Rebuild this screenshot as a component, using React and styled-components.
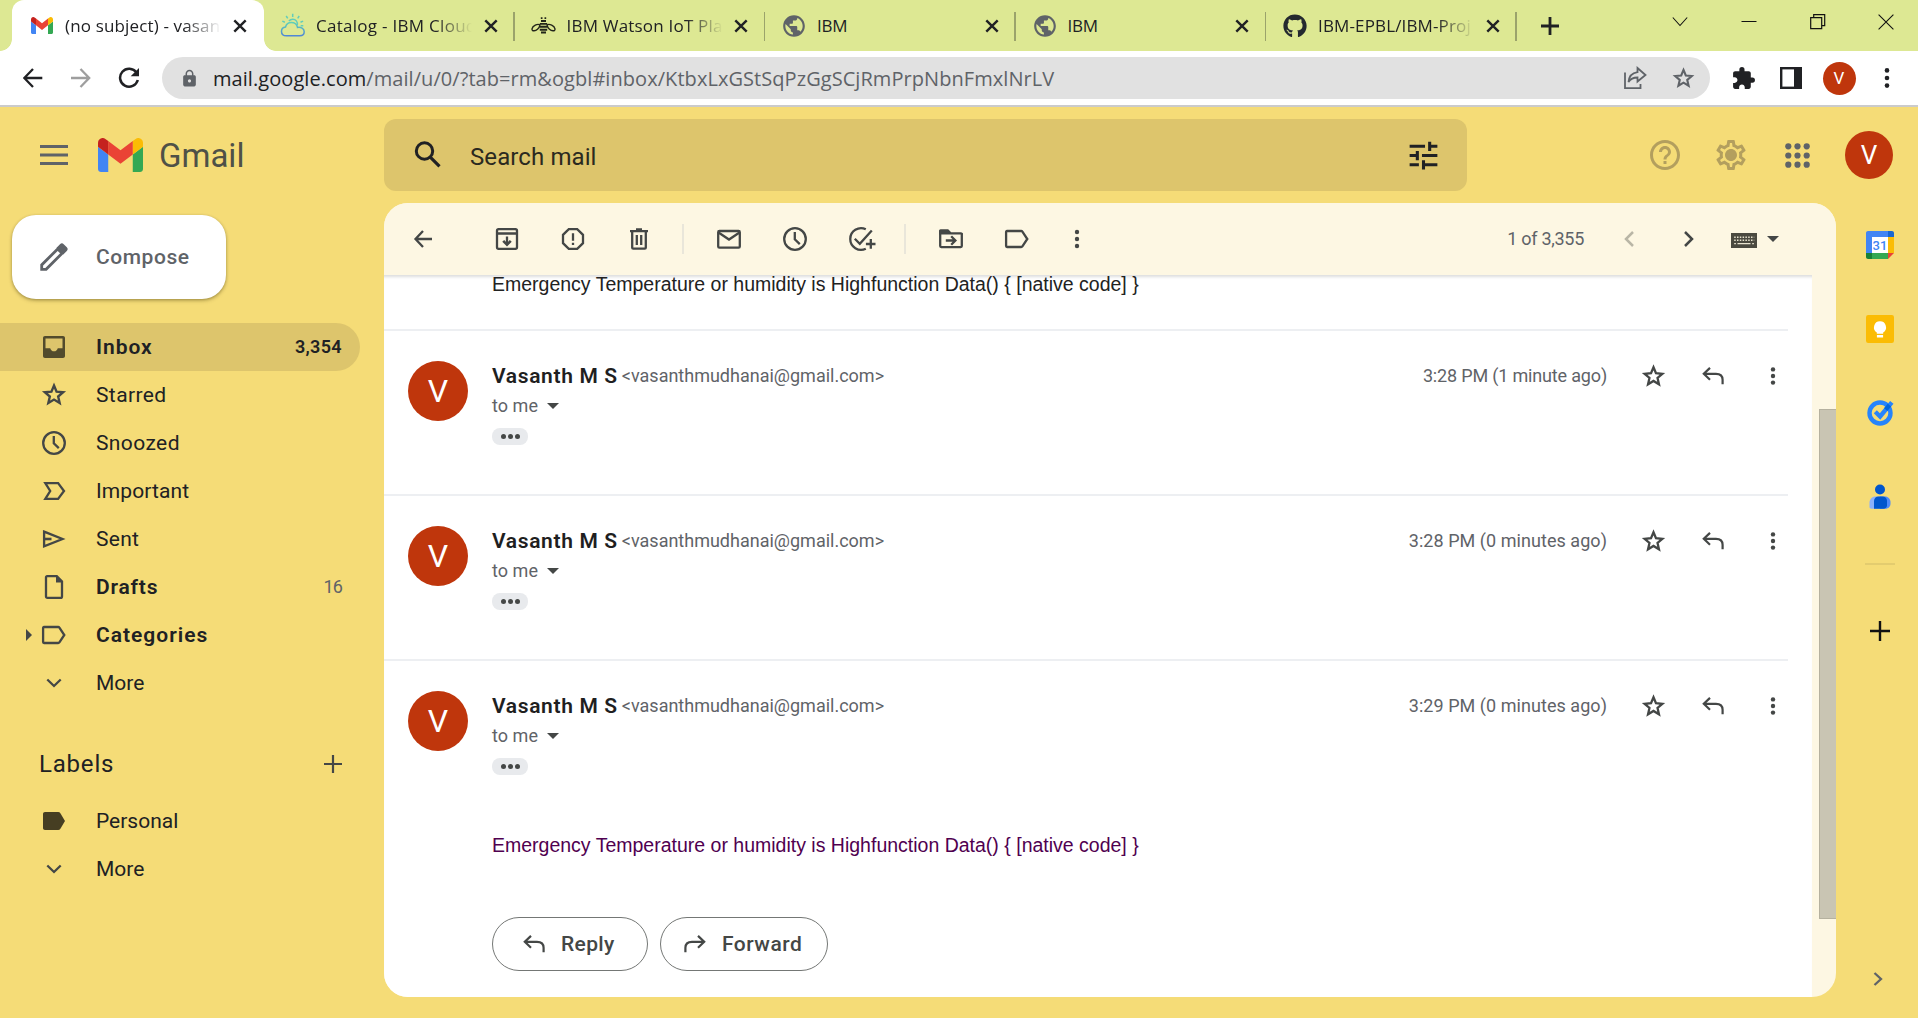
import React from "react";
import styled, { createGlobalStyle, css } from "styled-components";
import { MdPublic, MdLock, MdExtension, MdOutlineSettings, MdHelpOutline, MdTune } from "react-icons/md";
import { FaGithub } from "react-icons/fa";

const Global = createGlobalStyle`
  * { box-sizing: border-box; }
  html, body { margin: 0; padding: 0; height: 100%; overflow: hidden; }
  svg { display: block; flex: none; }
`;

const UI = `"Open Sans", "Noto Sans", sans-serif`;
const GS = `Roboto, "Liberation Sans", sans-serif`;

/* ---------- browser chrome ---------- */
const Page = styled.div`
  width: 100vw; height: 100vh; display: flex; flex-direction: column;
  background: #f5dc77; font-family: ${GS}; color: #202124; overflow: hidden;
`;
const TabStrip = styled.div`
  height: 51px; flex: none; display: flex; background: #dde893; padding-left: 12px;
`;
const Tab = styled.div`
  position: relative; height: 51px; width: ${(p) => (p.$active ? 252 : 250.5)}px; flex: none;
  display: flex; align-items: center; padding-left: ${(p) => (p.$active ? 18 : 17)}px;
  ${(p) =>
    p.$active
      ? css`
          background: #fff; border-radius: 12px 12px 0 0;
          &::before, &::after {
            content: ""; position: absolute; bottom: 0; width: 12px; height: 12px;
          }
          &::before { left: -12px; background: radial-gradient(circle at 0 0, transparent 11.5px, #fff 12.2px); }
          &::after { right: -12px; background: radial-gradient(circle at 100% 0, transparent 11.5px, #fff 12.2px); }
        `
      : css`
          &::after {
            content: ""; position: absolute; right: 0; top: 12px; height: 29px; width: 1.5px; background: #9ba36b;
          }
        `}
`;
const Favicon = styled.div`
  width: 24px; height: 24px; flex: none; display: flex; align-items: center; justify-content: center; color: ${(p) => p.$c || "#5f6368"};
`;
const TabTitle = styled.div`
  width: 156px; margin: 0 10.5px 0 11px; white-space: nowrap;
  font: 400 17px/26px ${UI}; letter-spacing: ${(p) => p.$ls || 0}px; color: #202124;
  ${(p) => p.$fade && css`mask-image: linear-gradient(to right, #000 76%, transparent 100%);`}
`;
const NewTab = styled.div`
  width: 66px; display: flex; align-items: center; justify-content: center;
`;
const WindowControls = styled.div`
  margin-left: auto; margin-right: -2px; height: 43px; display: flex; align-items: center;
`;
const Slot = styled.div`
  width: ${(p) => p.$w || 48}px; height: ${(p) => (p.$h ? p.$h + "px" : "auto")}; flex: none;
  display: flex; align-items: center; justify-content: center; color: ${(p) => p.$c || "#444746"};
`;
const AddressBar = styled.div`
  height: 56px; flex: none; display: flex; align-items: center; background: #fff;
  border-bottom: 2px solid #cbcbcb; padding-left: 9px; color: #202124;
`;
const Omnibox = styled.div`
  width: 1548px; height: 42px; margin: 0 9px; border-radius: 21px; background: #e1e1e1;
  display: flex; align-items: center; padding: 0 3px 0 15px;
`;
const Url = styled.div`
  flex: 1; margin: 2px 0 0 12px; font: 400 20px/30px ${UI}; letter-spacing: 0.06px; color: #5f6368; white-space: nowrap;
  b { font-weight: 400; color: #202124; }
`;
const Avatar = styled.div`
  width: ${(p) => p.$s}px; height: ${(p) => p.$s}px; flex: none; border-radius: 50%; background: #bf360c; color: #fff;
  display: flex; align-items: center; justify-content: center; font: 400 ${(p) => p.$f}px/1 ${GS};
`;

/* ---------- gmail header ---------- */
const Header = styled.header`
  height: 96px; flex: none; display: flex; align-items: center; padding-right: 25px;
`;
const Brand = styled.div`
  width: 384px; display: flex; align-items: center; padding-left: 40px;
`;
const BrandName = styled.div`
  margin: 2px 0 0 16px; font: 400 33px/40px ${GS}; letter-spacing: 0; color: #4f5147;
`;
const SearchBar = styled.div`
  width: 1083px; height: 72px; border-radius: 12px; background: #ddc56c; display: flex; align-items: center;
  padding: 0 29px 0 29px;
`;
const SearchText = styled.div`
  flex: 1; margin: 3px 0 0 29px; font: 400 24px/32px ${GS}; letter-spacing: 0.1px; color: #2b2a1f;
`;
const HeaderTools = styled.div`
  margin-left: auto; display: flex; align-items: center;
`;
const Gap = styled.div`width: ${(p) => p.$w}px; flex: none;`;

/* ---------- body ---------- */
const Body = styled.div`display: flex; flex: 1; min-height: 0;`;
const Side = styled.aside`width: 384px; flex: none; padding-top: 12px;`;
const Compose = styled.div`
  width: 214px; height: 84px; margin-left: 12px; border-radius: 24px; background: #fff;
  box-shadow: 0 1px 3px rgba(60, 50, 0, 0.35), 0 2px 4px rgba(60, 50, 0, 0.18);
  display: flex; align-items: center; padding-left: 27px; gap: 27px;
  font: 500 21px/28px ${GS}; letter-spacing: 0.55px; color: #5f6368;
`;
const Nav = styled.nav`margin-top: ${(p) => p.$mt || 0}px;`;
const NavItem = styled.div`
  position: relative; width: 360px; height: 48px; display: flex; align-items: center; padding: 0 18px 0 39px;
  border-radius: 0 24px 24px 0; background: ${(p) => (p.$active ? "#ddc56c" : "transparent")};
`;
const NavIcon = styled.div`width: 30px; height: 30px; color: ${(p) => p.$c || "#444746"};`;
const NavText = styled.div`
  flex: 1; margin-left: 27px; font: ${(p) => (p.$bold ? 600 : 400)} 21px/28px ${GS};
  letter-spacing: ${(p) => p.$ls || 0}px; color: #202124;
`;
const NavCount = styled.div`
  font: ${(p) => (p.$bold ? 600 : 400)} 18px/24px ${GS}; letter-spacing: ${(p) => p.$ls || 0}px;
  color: ${(p) => (p.$bold ? "#202124" : "#5f6368")};
`;
const Caret = styled.div`
  position: absolute; left: 26px; top: 18px; width: 0; height: 0;
  border: 6px solid transparent; border-left-color: #444746; border-right-width: 0;
`;
const LabelsHead = styled.div`
  width: 360px; height: 68px; margin-top: 23px; margin-bottom: -1px; padding: 0 18px 0 39px; display: flex; align-items: center; justify-content: space-between;
  font: 400 24px/32px ${GS}; letter-spacing: 0.8px; color: #202124;
`;

const Panel = styled.main`
  width: 1452px; height: 794px; flex: none; border-radius: 24px; overflow: hidden; background: #fdf7e3;
  display: flex; flex-direction: column;
`;
const Toolbar = styled.div`
  height: 72px; flex: none; display: flex; align-items: center; padding: 0 57px 0 6px; background: #fdf7e3;
  font: 400 18px/24px ${GS}; color: #5f6368;
`;
const Sep = styled.div`width: 2px; height: 30px; margin: 0 12px 0 10px; flex: none; background: #e9e6da;`;
const Counter = styled.div`margin-left: auto; margin-right: 15px; letter-spacing: -0.28px; white-space: nowrap;`;
const Content = styled.div`flex: 1; display: flex; min-height: 0;`;
const Thread = styled.div`
  width: 1428px; background: #fff; padding-right: 24px;
  box-shadow: inset 0 4px 3px -2px rgba(60, 64, 67, 0.18);
`;
const ScrollTrack = styled.div`width: 24px; padding: 134px 0 0 7px;`;
const Thumb = styled.div`height: 510px; background: #c9c5b3; border: 1px solid #b5b19f; border-right: 0;`;
const MailText = styled.div`
  font: 400 19.5px/22px "Liberation Sans", Arial, sans-serif; color: ${(p) => p.$c}; white-space: nowrap;
  margin: ${(p) => p.$m};
`;
const Message = styled.section`
  height: ${(p) => p.$h || 165}px; border-top: 2px solid #edeff2; padding: 30px 0 0 24px; display: flex; align-items: flex-start;
`;
const MsgMain = styled.div`flex: 1; margin-left: 24px;`;
const MsgHead = styled.div`height: 30px; display: flex; align-items: center;`;
const Name = styled.span`font: 600 21px/30px ${GS}; letter-spacing: 0.65px; color: #1f1f1f; white-space: nowrap;`;
const Email = styled.span`flex: 1; margin-left: 4px; font: 400 18px/30px ${GS}; letter-spacing: 0; color: #5f6368;`;
const Time = styled.span`margin-right: 16px; font: 400 18px/30px ${GS}; letter-spacing: ${(p) => p.$ls}px; color: #5f6368;`;
const ToMe = styled.div`
  height: 30px; display: flex; align-items: center; gap: 9px; font: 400 18px/30px ${GS}; letter-spacing: 0.05px; color: #5f6368;
`;
const DownCaret = styled.i`
  width: 0; height: 0; border: 6px solid transparent; border-top-color: #444746; border-bottom-width: 0;
`;
const Trimmed = styled.div`
  width: 36px; height: 17px; margin-top: 7px; border-radius: 8px; background: #e8eaed;
  display: flex; align-items: center; justify-content: center; gap: 2px;
  i { width: 5px; height: 5px; border-radius: 50%; background: #444746; }
`;
const Actions = styled.div`display: flex; gap: 12px; margin-top: 61px;`;
const ActionButton = styled.button`
  width: ${(p) => p.$w}px; height: 54px; border: 1px solid #747775; border-radius: 27px; background: #fff; padding: 0 0 0 ${(p) => p.$pl}px;
  display: flex; align-items: center; gap: 16px; font: 500 21px/28px ${GS}; letter-spacing: ${(p) => p.$ls}px; color: #444746;
`;

const Rail = styled.aside`
  width: 82px; height: 794px; display: flex; flex-direction: column; align-items: center; padding-left: 6px;
`;
const RailLine = styled.div`width: 30px; height: 2px; margin: 24px 0 24px; background: #e3cc6f;`;
const RailEnd = styled.div`margin-top: auto; margin-bottom: 3px; margin-left: -4px;`;

/* ---------- drawings ---------- */
const S = ({ w = 30, h, vb, sw = 2.3, children, fill = "none" }) => (
  <svg width={w} height={h || w} viewBox={vb || `0 0 ${w} ${h || w}`} fill={fill} stroke={fill === "none" ? "currentColor" : "none"} strokeWidth={sw}>
    {children}
  </svg>
);
const GmailLogo = ({ w, h }) => (
  <svg width={w} height={h} viewBox="52 42 88 66" preserveAspectRatio="none">
    <path fill="#4285f4" d="M58 108h14V74L52 59v43c0 3.32 2.69 6 6 6" />
    <path fill="#34a853" d="M120 108h14c3.32 0 6-2.69 6-6V59l-20 15" />
    <path fill="#fbbc04" d="M120 48v26l20-15v-8c0-7.42-8.47-11.65-14.4-7.2" />
    <path fill="#ea4335" d="M72 74V48l24 18 24-18v26L96 92" />
    <path fill="#c5221f" d="M52 51v8l20 15V48l-5.6-4.2c-5.94-4.45-14.4-.22-14.4 7.2" />
  </svg>
);
const CloseX = () => <S w={16} sw={2.4}><path d="M2.3 2.3l11.4 11.4M13.7 2.3L2.3 13.7" /></S>;
const CloudIcon = () => (
  <svg width="26" height="25" viewBox="0 0 26 25" fill="none" strokeWidth="1.5">
    <defs><linearGradient id="cl" x1="0" y1="0" x2="0" y2="1"><stop offset="0" stopColor="#5fd0b8" /><stop offset="1" stopColor="#4f86d6" /></linearGradient></defs>
    <path stroke="url(#cl)" d="M6.500 22.800C3.500 22.800 1.500 21 1.500 18.400c0-2.400 1.600-4.100 4-4.400C6.300 11.200 8.400 9.600 11.200 9.600c3.300 0 5.800 1.800 6.300 4.900 3.400-.6 6.700 1.100 6.700 4.300 0 2.300-1.800 4-4.400 4z" />
    <path stroke="#62cdbb" d="M17.300 12c.5-3.200-1.600-5.800-4.500-5.800-1.700 0-3 .7-3.900 1.800M12.700 4V.8M7.700 5.300L6.200 3M17.700 5.300L19.200 3M20.500 9.300l2.600-1.200M4.900 9.300L2.300 8.100M20.700 12.700h2.600" />
  </svg>
);
const BeeIcon = () => (
  <svg width="25" height="18" viewBox="0 0 25 18" fill="none" stroke="#23261a" strokeWidth="1.400">
    <path d="M9 7.800C6.500 6.500 1.600 8.500 1 11.800c-.3 3.200 3.800 2 5.500.5 1.200-1.100 2.200-2.800 2.500-4.500zM16 7.800c2.500-1.300 7.400.7 8 4 .3 3.200-3.800 2-5.500.5-1.200-1.100-2.200-2.800-2.500-4.500z" />
    <path strokeWidth="1.900" d="M10 4h5M8.800 6.900h7.400M8.800 9.800h7.400M8.800 12.700h7.400M10 15.500h5" />
    <path strokeWidth="1.700" d="M9.800 1.200h1.700M13.500 1.200h1.700" />
  </svg>
);
const Dots = ({ r = 2.2, gap = 7 }) => (
  <svg width="8" height="26" viewBox="0 0 8 26" fill="currentColor">
    <circle cx="4" cy={13 - gap} r={r} /><circle cx="4" cy="13" r={r} /><circle cx="4" cy={13 + gap} r={r} />
  </svg>
);
const Clock = () => <S><circle cx="15" cy="15" r="10.8" /><path d="M14.800 8v7.300l5 4.800" /></S>;
const Star = ({ s = 27 }) => (
  <svg width={s} height={s} viewBox="0 0 24 24" fill="none" stroke="currentColor" strokeWidth="1.9">
    <path d="M12 4.400l2.050 4.900 5.300.46-4.020 3.480 1.200 5.180L12 15.680l-4.530 2.740 1.200-5.180-4.020-3.480 5.300-.46z" strokeLinejoin="miter" />
  </svg>
);
const LabelIcon = ({ solid }) => (
  <S fill={solid ? "currentColor" : "none"}>
    {solid ? <path d="M6 6h13.200c.9 0 1.600.4 2.200 1.200L26 15l-4.600 7.800c-.5.800-1.300 1.200-2.200 1.200H6c-1.200 0-2-.8-2-2V8c0-1.200.8-2 2-2z" />
      : <path d="M5 7h14.200c.5 0 .9.200 1.200.6L25.300 15l-4.900 7.400c-.3.400-.7.600-1.200.6H5c-.6 0-.9-.4-.9-.9V7.900c0-.5.3-.9.900-.9z" />}
  </S>
);
const ChevDown = () => <S><path d="M8.300 11.500l6.700 6.500 6.700-6.500" /></S>;
const ReplyIcon = ({ w = 22, flip }) => (
  <svg width={w} height={w * 0.8} viewBox="0 0 22 17.6" fill="none" stroke="currentColor" strokeWidth="2.2" transform={flip ? "scale(-1,1)" : undefined}>
    <path d="M8 .9L1.800 6.800 8 12.700M2 6.800h12c4 0 6.600 2 6.600 6v4.500" />
  </svg>
);
const Archive = () => <S><rect x="5" y="5.200" width="20" height="19.600" rx="1.600" /><path d="M5 9.500h20M15 12.500v7.500" /><path d="M11.200 16.800l3.800 3.800 3.800-3.800" strokeWidth="2.600" /></S>;
const Spam = () => <S><path d="M10.800 5.200h8.400l5.800 5.600v8.400l-5.800 5.600h-8.400L5 19.200v-8.400z" /><path d="M15 9.200v7.600M15 18.700v2.300" /></S>;
const Trash = () => <S><path d="M6 7.200h18M12 5.500h6M8.200 7v16.700c0 .6.400 1 1 1h11.600c.6 0 1-.4 1-1V7M12.800 11v10M17.200 11v10" /></S>;
const Mail = () => <S><rect x="4.200" y="7" width="21.600" height="16.600" rx="1.200" /><path d="M4.500 8.500L15 15.500l10.500-7" /></S>;
const AddTask = () => <S><path d="M19.800 5.300A10.800 10.800 0 1 0 19.800 24.700" /><path d="M8.800 14.800l5 5L25.800 6.500M24.800 15v9.800M19.900 20h9.600" /></S>;
const MoveTo = () => <S><path d="M4.200 8.200v13.900c0 .6.400 1 1 1h19.600c.6 0 1-.4 1-1V9.300" /><path d="M3 9.200V7c0-1 .6-1.700 1.600-1.700h7.600l3 3H25c1 0 1.900.7 1.900 1.700v.6H3z" fill="currentColor" stroke="none" /><path d="M9.800 16.500h8.800M15.200 12.300l4.200 4.200-4.200 4.200" /></S>;
const Keyboard = () => (
  <svg width="26" height="17" viewBox="0 0 26 17"><rect y="2" width="26" height="15" fill="#4b4a40" />
    <path stroke="#e9e4d0" strokeWidth="1.500" strokeDasharray="1.500 1.300" d="M3.200 6.300h20M3.200 9.300h20" /><path stroke="#e9e4d0" strokeWidth="1.400" d="M6.500 12.600h13M3.200 12.600h1.700M21.200 12.600h1.700" /></svg>
);

const tabs = [
  { t: "(no subject) - vasan", ls: 0.15, active: true, fade: true, icon: <GmailLogo w={22} h={17} /> },
  { t: "Catalog - IBM Cloud", ls: 0.28, fade: true, icon: <CloudIcon /> },
  { t: "IBM Watson IoT Pla", ls: 0.2, fade: true, icon: <BeeIcon /> },
  { t: "IBM", ls: -0.2, icon: <MdPublic size={26} /> },
  { t: "IBM", ls: -0.2, icon: <MdPublic size={26} /> },
  { t: "IBM-EPBL/IBM-Proj", ls: 0.14, fade: true, icon: <FaGithub size={24} color="#24292f" /> },
];

const Msg = ({ time, ls, last }) => (
  <Message $h={last ? 174 : 165}>
    <Avatar $s={60} $f={32}>V</Avatar>
    <MsgMain>
      <MsgHead>
        <Name>Vasanth M S</Name>
        <Email>&lt;vasanthmudhanai@gmail.com&gt;</Email>
        <Time $ls={ls}>{time}</Time>
        <Slot $w={60} $h={34}><Star s={29} /></Slot>
        <Slot $w={60}><ReplyIcon /></Slot>
        <Gap $w={15} />
        <Slot $w={30}><Dots gap={6.6} /></Slot>
      </MsgHead>
      <ToMe>to me<DownCaret /></ToMe>
      <Trimmed><i /><i /><i /></Trimmed>
    </MsgMain>
  </Message>
);

export default function App() {
  return (
    <Page>
      <Global />
      <TabStrip>
        {tabs.map((x, i) => (
          <Tab key={i} $active={x.active}>
            <Favicon>{x.icon}</Favicon>
            <TabTitle $ls={x.ls} $fade={x.fade}>{x.t}</TabTitle>
            <CloseX />
          </Tab>
        ))}
        <NewTab><S w={18} sw={2.8}><path d="M9 0v18M0 9h18" /></S></NewTab>
        <WindowControls>
          <Slot $w={69} $c="#111"><S w={16} sw={1.1}><path d="M.8 3.500l7.200 8 7.200-8" /></S></Slot>
          <Slot $w={69} $c="#111"><S w={16} sw={1}><path d="M.5 7.500h15" /></S></Slot>
          <Slot $w={69} $c="#111"><S w={16} sw={1.2}><path d="M.7 3.700h11v11H.7zM3.700 3.700V.7h11v11h-3" /></S></Slot>
          <Slot $w={68} $c="#111"><S w={16} sw={1.1}><path d="M.6.600l14.800 14.800M15.400.6L.6 15.400" /></S></Slot>
        </WindowControls>
      </TabStrip>
      <AddressBar>
        <Slot $c="#202124"><S w={20} sw={2.3}><path d="M10 1L1.300 10l8.700 9M1.300 10h18" /></S></Slot>
        <Slot $c="#9e9e9e"><S w={20} sw={2.3}><path d="M9.500 1l8.700 9-8.700 9M18.200 10H0" /></S></Slot>
        <Slot $c="#202124"><S w={22} sw={2.5}><path d="M18.500 5.600A9 9 0 1 0 19.800 13" /><path d="M21 1v8.300h-8.300z" fill="currentColor" stroke="none" /></S></Slot>
        <Omnibox>
          <Slot $w={24} $c="#5f6368"><MdLock size={19} /></Slot>
          <Url><b>mail.google.com</b>/mail/u/0/?tab=rm&amp;ogbl#inbox/KtbxLxGStSqPzGgSCjRmPrpNbnFmxlNrLV</Url>
          <Slot $c="#5f6368"><S w={24} sw={1.8}><path d="M2 6.500v15.600h15.500v-4M14.500 2l8 7-8 6.500v-4c-4 0-7 1.300-9 4.500.5-5.500 3.500-9 9-9.800z" /></S></Slot>
          <Slot $c="#5f6368"><Star s={27} /></Slot>
        </Omnibox>
        <Slot $c="#202124"><MdExtension size={25} /></Slot>
        <Slot $c="#202124"><S w={22} sw={2.4}><rect x="1.200" y="1.200" width="19.600" height="19.600" /><path d="M14 1h7v20h-7z" fill="currentColor" stroke="none" /></S></Slot>
        <Slot><Avatar $s={33} $f={17}>V</Avatar></Slot>
        <Slot $c="#202124"><Dots r={2.300} gap={7.600} /></Slot>
      </AddressBar>

      <Header>
        <Brand>
          <Slot $w={28} $c="#5f6368"><S w={28} sw={3}><path d="M0 5.500h28M0 14h28M0 22.500h28" /></S></Slot>
          <Gap $w={30} />
          <GmailLogo w={45} h={34} />
          <BrandName>Gmail</BrandName>
        </Brand>
        <SearchBar>
          <Slot $w={28} $c="#202124"><S w={28} sw={3}><circle cx="11.500" cy="10" r="8.200" /><path d="M17 15.800l9.500 9.500" strokeWidth="3.200" /></S></Slot>
          <SearchText>Search mail</SearchText>
          <Slot $w={30} $c="#202124"><MdTune size={37} /></Slot>
        </SearchBar>
        <HeaderTools>
          <Slot $w={66} $c="#b39f5e"><MdHelpOutline size={36} /></Slot>
          <Slot $w={66} $c="#b39f5e">
            <svg width="36" height="36" viewBox="0 0 36 36">
              <MdOutlineSettings size={36} strokeWidth="0" />
              <circle cx="18" cy="18" r="4.500" fill="currentColor" />
            </svg>
          </Slot>
          <Slot $w={66} $c="#5f6368">
            <svg width="25" height="25" viewBox="0 0 25 25" fill="currentColor">
              {[3.300, 12.500, 21.700].map((y) => [3.300, 12.500, 21.700].map((x) => <circle key={x + "-" + y} cx={x} cy={y} r="3.100" />))}
            </svg>
          </Slot>
          <Gap $w={15} />
          <Avatar $s={48} $f={26}>V</Avatar>
        </HeaderTools>
      </Header>

      <Body>
        <Side>
          <Compose>
            <S><path d="M2.700 27.300v-4.400L18.700 6.900l4.400 4.400-16 16z" strokeWidth="2.800" /><path d="M17.500 5.700l3.500-3.500c1.200-1.200 2.600-1.200 3.700 0l3.100 3.100c1.200 1.200 1.200 2.500 0 3.700l-3.500 3.500z" fill="currentColor" stroke="none" /></S>
            Compose
          </Compose>
          <Nav $mt={24}>
            <NavItem $active>
              <NavIcon $c="#524b2c">
                <svg width="30" height="30" viewBox="0 0 30 30" fill="currentColor" fillRule="evenodd"><path d="M6 4h18c1.200 0 2 .8 2 2v18c0 1.200-.8 2-2 2H6c-1.200 0-2-.8-2-2V6c0-1.200.8-2 2-2zM6.500 6.500v9.700h4.700c.6 2 1.900 3.100 3.800 3.100s3.200-1.100 3.800-3.100h4.700V6.500z" /></svg>
              </NavIcon>
              <NavText $bold $ls={0.95}>Inbox</NavText><NavCount $bold $ls={0.35}>3,354</NavCount>
            </NavItem>
            <NavItem><NavIcon><Star s={30} /></NavIcon><NavText $ls={0.4}>Starred</NavText></NavItem>
            <NavItem><NavIcon><Clock /></NavIcon><NavText $ls={0.4}>Snoozed</NavText></NavItem>
            <NavItem><NavIcon><S><path d="M6.300 7.100h12.800L25 15l-5.900 7.900H6.300L11.200 15z" /></S></NavIcon><NavText $ls={0.1}>Important</NavText></NavItem>
            <NavItem><NavIcon><S><path d="M5.100 7.600L23.500 15 5.100 22.400z" /><path d="M5 15h7.500" strokeWidth="2.600" /></S></NavIcon><NavText $ls={0.28}>Sent</NavText></NavItem>
            <NavItem><NavIcon><S><path d="M7.600 4.200h10.200l5.200 5.200v15c0 .9-.5 1.400-1.400 1.400H8.400c-.9 0-1.400-.5-1.400-1.400V5.600c0-.9.5-1.400 1.400-1.400z" /><path d="M17 4v6.500h6.500z" fill="currentColor" stroke="none" /></S></NavIcon><NavText $bold $ls={0.8}>Drafts</NavText><NavCount $ls={-0.9}>16</NavCount></NavItem>
            <NavItem><Caret /><NavIcon><LabelIcon /></NavIcon><NavText $bold $ls={1}>Categories</NavText></NavItem>
            <NavItem><NavIcon><ChevDown /></NavIcon><NavText $ls={0}>More</NavText></NavItem>
          </Nav>
          <LabelsHead>Labels<S w={18} sw={2.200}><path d="M9 0v18M0 9h18" stroke="#444746" /></S></LabelsHead>
          <Nav>
            <NavItem><NavIcon $c="#463e22"><LabelIcon solid /></NavIcon><NavText $ls={0}>Personal</NavText></NavItem>
            <NavItem><NavIcon><ChevDown /></NavIcon><NavText $ls={0}>More</NavText></NavItem>
          </Nav>
        </Side>

        <Panel>
          <Toolbar>
            <Slot $w={66}><S w={20} sw={2.300}><path d="M10 2L2.500 10l7.500 8M2.500 10H19" /></S></Slot>
            <Gap $w={18} />
            <Slot $w={66}><Archive /></Slot>
            <Slot $w={66}><Spam /></Slot>
            <Slot $w={66}><Trash /></Slot>
            <Sep />
            <Slot $w={66}><Mail /></Slot>
            <Slot $w={66}><Clock /></Slot>
            <Slot $w={66}><AddTask /></Slot>
            <Sep />
            <Slot $w={66}><MoveTo /></Slot>
            <Slot $w={66}><LabelIcon /></Slot>
            <Slot $w={54}><Dots /></Slot>
            <Counter>1 of 3,355</Counter>
            <Slot $w={60} $c="#b9b6a6"><S w={16} sw={2.500}><path d="M12 1L5 8l7 7" /></S></Slot>
            <Slot $w={60}><S w={16} sw={2.500}><path d="M4 1l7 7-7 7" /></S></Slot>
            <Gap $w={12} />
            <Slot $w={26} $h={20}><Keyboard /></Slot>
            <Gap $w={10} />
            <DownCaret />
          </Toolbar>
          <Content>
            <Thread>
              <MailText $c="#222" $m="-2px 0 34px 108px">Emergency Temperature or humidity is Highfunction Data() {"{ [native code] }"}</MailText>
              <Msg time="3:28 PM (1 minute ago)" ls={-0.17} />
              <Msg time="3:28 PM (0 minutes ago)" ls={0.05} />
              <Msg time="3:29 PM (0 minutes ago)" ls={0.05} last />
              <MailText $c="#500050" $m="1px 0 0 108px">Emergency Temperature or humidity is Highfunction Data() {"{ [native code] }"}</MailText>
              <Actions>
                <Gap $w={96} />
                <ActionButton $w={156} $pl={30} $ls={0.35}><ReplyIcon w={22} />Reply</ActionButton>
                <ActionButton $w={168} $pl={23} $ls={0.5}><ReplyIcon w={22} flip />Forward</ActionButton>
              </Actions>
            </Thread>
            <ScrollTrack><Thumb /></ScrollTrack>
          </Content>
        </Panel>

        <Rail>
          <Slot $w={40} $h={84}>
            <svg width="28" height="28" viewBox="0 0 28 28">
              <path fill="#4285f4" d="M2 0h20v6H6v16H0V2C0 .9.900 0 2 0z" /><path fill="#1967d2" d="M22 0h4c1.100 0 2 .900 2 2v4h-6z" />
              <path fill="#fbbc04" d="M22 6h6v16h-6z" /><path fill="#34a853" d="M6 22h16v6H6z" /><path fill="#188038" d="M0 22h6v6H2c-1.100 0-2-.900-2-2z" />
              <path fill="#ea4335" d="M22 22h6l-6 6z" /><path fill="#fff" d="M6 6h16v16H6z" />
              <text x="14" y="19" textAnchor="middle" fontFamily="Roboto" fontSize="13" fontWeight="500" fill="#4285f4">31</text>
            </svg>
          </Slot>
          <Slot $w={40} $h={84}>
            <svg width="28" height="28" viewBox="0 0 28 28"><rect width="28" height="28" rx="2.200" fill="#fbbc04" />
              <path fill="#fff" d="M14 6.300a6 6 0 0 0-3.200 11.100V18.700h6.400v-1.300A6 6 0 0 0 14 6.300zM10.900 20h6.200v2.400h-6.200z" /></svg>
          </Slot>
          <Slot $w={40} $h={84}>
            <svg width="28" height="28" viewBox="0 0 28 28" fill="none"><circle cx="14" cy="14" r="10.500" stroke="#2684fc" strokeWidth="4.400" />
              <path stroke="#2684fc" strokeWidth="4.400" d="M9.300 12.800l4.800 4.700L25.800 3.300" /><path stroke="#0066da" strokeWidth="4.400" d="M19.700 10.700l3.800-4.600" /></svg>
          </Slot>
          <Slot $w={40} $h={84}>
            <svg width="24" height="28" viewBox="0 0 24 28"><circle cx="12" cy="6.500" r="5" fill="#0056cc" />
              <path fill="#8ab0fb" d="M7.500 13.500h6v12.200H3.200c-1 0-1.700-.7-1.700-1.700v-4.500c0-3.300 2.700-6 6-6z" />
              <path fill="#4f8bf8" d="M12 13.500h5c3.100 0 5.500 2.500 5.500 5.500v1.700c0 2.800-2.200 5-5 5H12z" />
              <path fill="#0056cc" d="M10.500 13.500h4.200c2.400 0 4.300 1.900 4.300 4.300v4.400c0 2-1.500 3.500-3.500 3.500H6v-7.700c0-2.500 2-4.500 4.500-4.500z" /></svg>
          </Slot>
          <RailLine />
          <Slot $w={40} $h={84} $c="#111"><S w={20} sw={2.400}><path d="M10 0v20M0 10h20" /></S></Slot>
          <RailEnd><Slot $w={30} $h={30} $c="#5f6368"><S w={16} sw={2.300}><path d="M4.500 2l6.500 6-6.500 6" /></S></Slot></RailEnd>
        </Rail>
      </Body>
    </Page>
  );
}
